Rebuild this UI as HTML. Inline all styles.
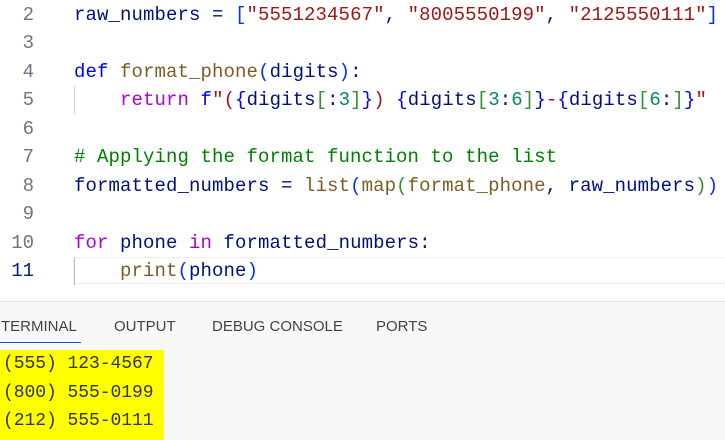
<!DOCTYPE html>
<html style="overflow:hidden;height:440px"><head><meta charset="utf-8"><style>
body{margin:0;width:725px;height:440px;overflow:hidden;background:#fff;position:relative;font-family:"Liberation Mono","DejaVu Sans Mono",monospace}
.ln{position:absolute;left:0;width:34px;text-align:right;color:#6e7681;font-size:19px;line-height:28.45px}
.code{position:absolute;left:74px;font-size:19px;letter-spacing:0.1px;line-height:28.45px;white-space:pre;color:#001080}
.k{color:#0000ff}.f{color:#795e26}.s{color:#a31515}.c{color:#af00db}.g{color:#008000}.b1{color:#0431fa}.b2{color:#319331}.n{color:#098658}
.cur{position:absolute;left:73px;top:257px;width:660px;height:27px;border:1px solid #eeeeee;box-sizing:border-box}
.guide{position:absolute;left:74px;width:1px;background:#d3d3d3}
.panel{position:absolute;left:0;top:301px;width:725px;height:139px;background:#f8f8f8;border-top:1px solid #e5e5e5}
.tab{position:absolute;top:318px;font-family:"Liberation Sans",sans-serif;font-size:15px;color:#424242}
.term{position:absolute;left:3px;top:350px;font-size:18px;line-height:28.5px;white-space:pre;color:#333;letter-spacing:-0.05px}
</style></head><body>
<div class="cur"></div>
<div class="guide" style="top:86px;height:28px"></div>
<div class="guide" style="top:258px;height:27px;background:#bbb"></div>
<div class="ln" style="top:1px">2<br>3<br>4<br>5<br>6<br>7<br>8<br>9<br>10<br><span style="color:#0b216f">11</span></div>
<div class="code" style="top:1px">raw_numbers = <span class="b1">[</span><span class="s">"5551234567"</span>, <span class="s">"8005550199"</span>, <span class="s">"2125550111"</span><span class="b1">]</span>

<span class="k">def</span> <span class="f">format_phone</span><span class="b1">(</span>digits<span class="b1">)</span>:
    <span class="c">return</span> <span class="k">f</span><span class="s">"(</span><span class="k">{</span>digits<span class="b2">[</span>:<span class="n">3</span><span class="b2">]</span><span class="k">}</span><span class="s">) </span><span class="k">{</span>digits<span class="b2">[</span><span class="n">3</span>:<span class="n">6</span><span class="b2">]</span><span class="k">}</span><span class="s">-</span><span class="k">{</span>digits<span class="b2">[</span><span class="n">6</span>:<span class="b2">]</span><span class="k">}</span><span class="s">"</span>

<span class="g"># Applying the format function to the list</span>
formatted_numbers = <span class="f">list</span><span class="b1">(</span><span class="f">map</span><span class="b2">(</span><span class="f">format_phone</span>, raw_numbers<span class="b2">)</span><span class="b1">)</span>

<span class="c">for</span> phone <span class="c">in</span> formatted_numbers:
    <span class="f">print</span><span class="b1">(</span>phone<span class="b1">)</span></div>
<div class="panel"></div>
<div class="tab" style="left:1px">TERMINAL</div>
<div style="position:absolute;left:0;top:342px;width:81px;height:1px;background:#005fb8"></div>
<div class="tab" style="left:114px">OUTPUT</div>
<div class="tab" style="left:212px">DEBUG CONSOLE</div>
<div class="tab" style="left:376px">PORTS</div>
<div style="position:absolute;left:0;top:350px;width:164px;height:90px;background:#ffff00"></div>
<div class="term">(555) 123-4567
(800) 555-0199
(212) 555-0111
(venv) PS C:\Users\Public> python .\format.py</div>
</body></html>
